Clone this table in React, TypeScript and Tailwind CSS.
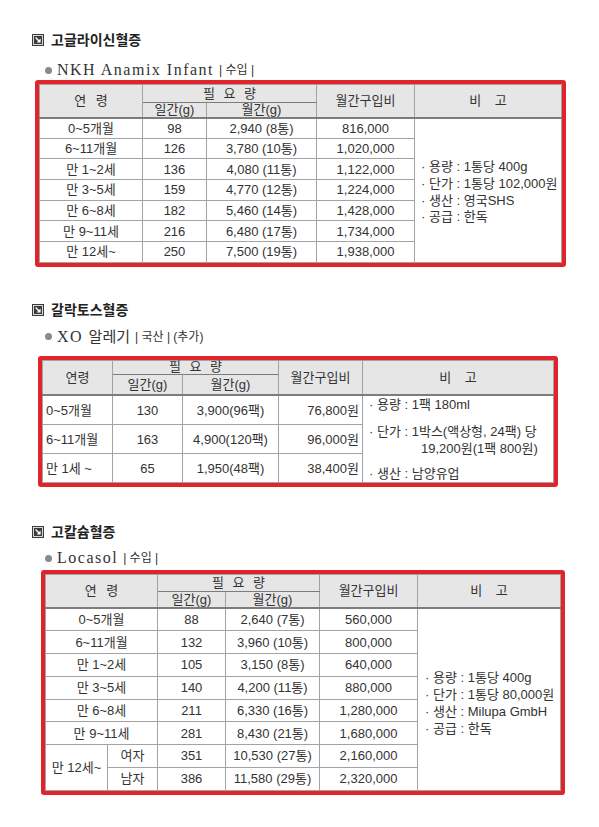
const sans = "font-['Liberation_Sans','Noto_Sans_CJK_KR',sans-serif]"

const td = 'border border-[#a3a3a3] p-0 text-center align-middle'
const th = 'border border-[#a3a3a3] border-b-[#7c7c7c] p-0 text-center align-middle font-normal bg-[#e6e6e6] leading-[12px]'

const glycine = [
  ['0~5개월', '98', '2,940 (8통)', '816,000'],
  ['6~11개월', '126', '3,780 (10통)', '1,020,000'],
  ['만 1~2세', '136', '4,080 (11통)', '1,122,000'],
  ['만 3~5세', '159', '4,770 (12통)', '1,224,000'],
  ['만 6~8세', '182', '5,460 (14통)', '1,428,000'],
  ['만 9~11세', '216', '6,480 (17통)', '1,734,000'],
  ['만 12세~', '250', '7,500 (19통)', '1,938,000'],
]

const galactose = [
  ['0~5개월', '130', '3,900(96팩)', '76,800원'],
  ['6~11개월', '163', '4,900(120팩)', '96,000원'],
  ['만 1세 ~', '65', '1,950(48팩)', '38,400원'],
]

const calcium = [
  ['0~5개월', '88', '2,640 (7통)', '560,000'],
  ['6~11개월', '132', '3,960 (10통)', '800,000'],
  ['만 1~2세', '105', '3,150 (8통)', '640,000'],
  ['만 3~5세', '140', '4,200 (11통)', '880,000'],
  ['만 6~8세', '211', '6,330 (16통)', '1,280,000'],
  ['만 9~11세', '281', '8,430 (21통)', '1,680,000'],
]

function TitleIcon() {
  return (
    <svg width="12" height="12" viewBox="0 0 12 12" className="shrink-0">
      <rect x="0" y="0" width="12" height="12" fill="#3b3b3b" />
      <rect x="1.5" y="1.5" width="9" height="9" fill="none" stroke="#fff" strokeWidth="0.8" />
      <path d="M3.6 3.6 L7.8 7.8" stroke="#fff" strokeWidth="1.4" />
      <path d="M8.6 4.6 L8.6 8.6 L4.6 8.6 Z" fill="#fff" />
    </svg>
  )
}

function Title({ text }: { text: string }) {
  return (
    <div className="flex items-center h-[20px] pl-[32px] gap-[7px]">
      <TitleIcon />
      <span className={`${sans} text-[14px] font-bold text-[#222] leading-none`}>{text}</span>
    </div>
  )
}

function Product({ name, tag }: { name: React.ReactNode; tag: string }) {
  return (
    <div className="flex items-center h-[20px] pl-[45px] leading-[20px]">
      <span className="w-[7px] h-[7px] rounded-full bg-[#8a8a8a] mr-[5px]" />
      {name}
      <span className={`${sans} text-[12px] text-[#333] ml-[5px]`}>{tag}</span>
    </div>
  )
}

function Box({ className, children }: { className: string; children: React.ReactNode }) {
  return <div className={`border-4 border-[#e1242c] rounded-[3px] ${className}`}>{children}</div>
}

export default function App() {
  return (
    <div className={`w-[599px] min-h-[827px] bg-white text-[#333] pt-[30px] ${sans}`}>
      {/* 고글라이신혈증 */}
      <Title text="고글라이신혈증" />
      <div className="mt-[10px]">
        <Product
          name={<span className="font-['Liberation_Serif',serif] text-[16px] tracking-[1.5px] text-[#333]">NKH Anamix Infant</span>}
          tag="| 수입 |"
        />
      </div>
      <Box className="ml-[35px] w-[531px]">
        <table className="w-full table-fixed border-collapse text-[13px] leading-[15px]">
          <colgroup>
            <col className="w-[103px]" />
            <col className="w-[64px]" />
            <col className="w-[110px]" />
            <col className="w-[98px]" />
            <col />
          </colgroup>
          <thead>
            <tr className="h-[18px]">
              <th rowSpan={2} className={`${th} border-b-2 [word-spacing:6px]`}>연 령</th>
              <th colSpan={2} className={`${th} [word-spacing:5px]`}>필 요 량</th>
              <th rowSpan={2} className={`${th} border-b-2`}>월간구입비</th>
              <th rowSpan={2} className={`${th} border-b-2 [word-spacing:10px]`}>비 고</th>
            </tr>
            <tr className="h-[15px]">
              <th className={`${th} border-b-2`}>일간(g)</th>
              <th className={`${th} border-b-2`}>월간(g)</th>
            </tr>
          </thead>
          <tbody>
            {glycine.map((r, i) => (
              <tr key={i} className="h-[20.7px]">
                <td className={td}>{r[0]}</td>
                <td className={td}>{r[1]}</td>
                <td className={td}>{r[2]}</td>
                <td className={td}>{r[3]}</td>
                {i === 0 && (
                  <td rowSpan={7} className={`${td} text-left pl-[6px]`}>
                    <div className="flex flex-col leading-[16.7px] pt-[5px]">
                      <span>· 용량 : 1통당 400g</span>
                      <span>· 단가 : 1통당 102,000원</span>
                      <span>· 생산 : 영국SHS</span>
                      <span>· 공급 : 한독</span>
                    </div>
                  </td>
                )}
              </tr>
            ))}
          </tbody>
        </table>
      </Box>

      {/* 갈락토스혈증 */}
      <div className="mt-[33px]">
        <Title text="갈락토스혈증" />
      </div>
      <div className="mt-[7px]">
        <Product
          name={
            <span className="text-[#333]">
              <span className="font-['Liberation_Serif',serif] text-[16px] tracking-[1.5px]">XO </span>
              <span className="text-[15px]">알레기</span>
            </span>
          }
          tag="| 국산 | (추가)"
        />
      </div>
      <Box className="mt-[9px] ml-[38px] w-[520px]">
        <table className="w-full table-fixed border-collapse text-[13px] leading-[15px]">
          <colgroup>
            <col className="w-[70px]" />
            <col className="w-[70px]" />
            <col className="w-[96px]" />
            <col className="w-[84px]" />
            <col />
          </colgroup>
          <thead>
            <tr className="h-[14px]">
              <th rowSpan={2} className={`${th} border-b-2`}>연령</th>
              <th colSpan={2} className={`${th} [word-spacing:5px]`}>필 요 량</th>
              <th rowSpan={2} className={`${th} border-b-2`}>월간구입비</th>
              <th rowSpan={2} className={`${th} border-b-2 [word-spacing:10px]`}>비 고</th>
            </tr>
            <tr className="h-[21px]">
              <th className={`${th} border-b-2`}>일간(g)</th>
              <th className={`${th} border-b-2`}>월간(g)</th>
            </tr>
          </thead>
          <tbody>
            {galactose.map((r, i) => (
              <tr key={i} className="h-[29px]">
                <td className={`${td} text-left pl-[3px]`}>{r[0]}</td>
                <td className={td}>{r[1]}</td>
                <td className={td}>{r[2]}</td>
                <td className={`${td} text-right pr-[3px]`}>{r[3]}</td>
                {i === 0 && (
                  <td rowSpan={3} className={`${td} text-left align-top pl-[6px]`}>
                    <div className="flex flex-col leading-[17px]">
                      <span>· 용량 : 1팩 180ml</span>
                      <span className="mt-[10px]">· 단가 : 1박스(액상형, 24팩) 당</span>
                      <span className="pl-[52px]">19,200원(1팩 800원)</span>
                      <span className="mt-[8px]">· 생산 : 남양유업</span>
                    </div>
                  </td>
                )}
              </tr>
            ))}
          </tbody>
        </table>
      </Box>

      {/* 고칼슘혈증 */}
      <div className="mt-[35px]">
        <Title text="고칼슘혈증" />
      </div>
      <div className="mt-[6px]">
        <Product
          name={<span className="font-['Liberation_Serif',serif] text-[16px] tracking-[1.5px] text-[#333]">Locasol</span>}
          tag="| 수입 |"
        />
      </div>
      <Box className="mt-[2px] ml-[41px] w-[524px]">
        <table className="w-full table-fixed border-collapse text-[13px] leading-[15px]">
          <colgroup>
            <col className="w-[62px]" />
            <col className="w-[50px]" />
            <col className="w-[68px]" />
            <col className="w-[94px]" />
            <col className="w-[98px]" />
            <col />
          </colgroup>
          <thead>
            <tr className="h-[17px]">
              <th rowSpan={2} colSpan={2} className={`${th} border-b-2 [word-spacing:6px]`}>연 령</th>
              <th colSpan={2} className={`${th} [word-spacing:5px]`}>필 요 량</th>
              <th rowSpan={2} className={`${th} border-b-2`}>월간구입비</th>
              <th rowSpan={2} className={`${th} border-b-2 [word-spacing:10px]`}>비 고</th>
            </tr>
            <tr className="h-[16px]">
              <th className={`${th} border-b-2`}>일간(g)</th>
              <th className={`${th} border-b-2`}>월간(g)</th>
            </tr>
          </thead>
          <tbody>
            {calcium.map((r, i) => (
              <tr key={i} className="h-[22.8px]">
                <td colSpan={2} className={td}>{r[0]}</td>
                <td className={td}>{r[1]}</td>
                <td className={td}>{r[2]}</td>
                <td className={td}>{r[3]}</td>
                {i === 0 && (
                  <td rowSpan={8} className={`${td} text-left pl-[7px]`}>
                    <div className="flex flex-col leading-[17px] pt-[8px]">
                      <span>· 용량 : 1통당 400g</span>
                      <span>· 단가 : 1통당 80,000원</span>
                      <span>· 생산 : Milupa GmbH</span>
                      <span>· 공급 : 한독</span>
                    </div>
                  </td>
                )}
              </tr>
            ))}
            <tr className="h-[22.8px]">
              <td rowSpan={2} className={td}>만 12세~</td>
              <td className={td}>여자</td>
              <td className={td}>351</td>
              <td className={td}>10,530 (27통)</td>
              <td className={td}>2,160,000</td>
            </tr>
            <tr className="h-[22.8px]">
              <td className={td}>남자</td>
              <td className={td}>386</td>
              <td className={td}>11,580 (29통)</td>
              <td className={td}>2,320,000</td>
            </tr>
          </tbody>
        </table>
      </Box>
    </div>
  )
}
